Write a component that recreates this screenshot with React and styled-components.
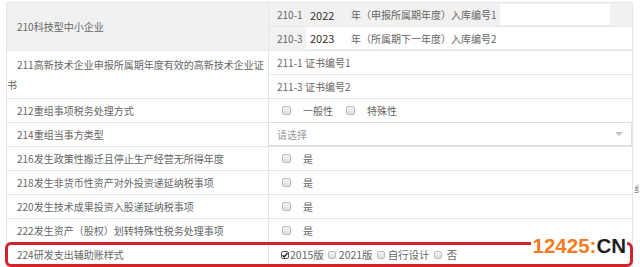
import React from "react";
import styled, { createGlobalStyle } from "styled-components";

const GlobalStyle = createGlobalStyle`
  html, body {
    margin: 0;
    padding: 0;
    background: #fff;
    overflow: hidden;
  }
  body {
    font-family: "Noto Sans CJK SC", "Noto Sans", sans-serif;
  }
`;

const Page = styled.div`
  display: flex;
  width: 640px;
  height: 267px;
  box-sizing: border-box;
  padding: 2px 0 0 6px;
  overflow: hidden;
`;

const Table = styled.div`
  width: 627px;
  flex: none;
  border-top: 1px solid #e6e6e6;
  border-left: 1px solid #e6e6e6;
  border-right: 1px solid #e6e6e6;
  box-sizing: border-box;
`;

const Side = styled.div`
  padding: 179px 0 0 1px;
  font-size: 10px;
  color: #777;
  white-space: nowrap;
`;

const Row = styled.div`
  display: grid;
  grid-template-columns: 261px 1fr;
  border-bottom: 1px solid #e6e6e6;
  background: ${(p) => (p.$shade ? "#f1f1f1" : "#fff")};
  position: relative;
`;

const Label = styled.div`
  display: flex;
  align-items: center;
  padding: 0 2px 0 0;
  min-height: ${(p) => p.$h || 23}px;
  font-size: 10px;
  line-height: 20px;
  color: #666;
  span {
    display: block;
    text-indent: 10px;
  }
`;

const Cell = styled.div`
  border-left: 1px solid #e6e6e6;
  display: flex;
  flex-direction: column;
  font-size: 10px;
  color: #666;
`;

const Sub = styled.div`
  display: flex;
  align-items: center;
  height: ${(p) => p.$h}px;
  border-bottom: ${(p) => (p.$last ? "none" : "1px solid #e6e6e6")};
  background: ${(p) => (p.$shade ? "#f1f1f1" : "#fff")};
`;

const Prefix = styled.div`
  align-self: stretch;
  display: flex;
  align-items: center;
  width: 37px;
  padding-left: 8px;
  box-sizing: border-box;
  background: #f1f1f1;
  flex: none;
`;

const Year = styled.div`
  width: 41px;
  padding-left: 4px;
  font-size: 11px;
  color: #333;
  flex: none;
`;

const Caption = styled.div`
  width: 149px;
  flex: none;
  white-space: nowrap;
`;

const Input = styled.div`
  align-self: stretch;
  width: 110px;
  margin: 1px 0;
  background: #fff;
  flex: none;
`;

const Plain = styled.div`
  display: flex;
  align-items: center;
  height: 23px;
  padding-left: 8px;
`;

const Options = styled.div`
  display: flex;
  align-items: center;
  height: 23px;
  padding-left: ${(p) => p.$pad || 13}px;
  gap: ${(p) => p.$gap || 12}px;
`;

const Option = styled.label`
  display: flex;
  align-items: center;
  gap: ${(p) => p.$gap || 12}px;
  color: #666;
  font-size: ${(p) => p.$fs || 10}px;
`;

const Box = styled.span`
  display: inline-flex;
  align-items: center;
  justify-content: center;
  width: ${(p) => p.$size}px;
  height: ${(p) => p.$size}px;
  box-sizing: border-box;
  border: 1px solid ${(p) => (p.$checked ? "#555" : "#bdbdbd")};
  border-radius: 2px;
  background: ${(p) =>
    p.$checked ? "#fff" : "linear-gradient(#f5f5f5, #dcdcdc)"};
  flex: none;
`;

const Select = styled.div`
  display: flex;
  align-items: center;
  justify-content: space-between;
  height: 24px;
  margin: -1px 0 -1px -1px;
  padding: 0 8px 0 8px;
  border: 1px solid #dedede;
  box-sizing: border-box;
  color: #999;
`;

const Caret = styled.span`
  width: 0;
  height: 0;
  border-left: 4px solid transparent;
  border-right: 4px solid transparent;
  border-top: 4px solid #c4c4c4;
`;

const Highlight = styled.div`
  position: absolute;
  top: -1px;
  left: -2px;
  right: -1px;
  bottom: -1px;
  border: 3px solid #d2232a;
  border-radius: 6px;
  pointer-events: none;
`;

const Mark = styled.div`
  position: absolute;
  top: -9px;
  right: 3px;
  padding: 0 1px 0 2px;
  background: #fff;
  font-family: "Liberation Sans", Arial, sans-serif;
  font-weight: bold;
  font-size: 20.5px;
  line-height: 1;
  color: #1e1e1e;
  letter-spacing: 0;
  em {
    font-style: normal;
    color: #f47b20;
  }
`;

const Check = ({ checked, size = 9 }) => (
  <Box $checked={checked} $size={size}>
    {checked && (
      <svg width="6" height="6" viewBox="0 0 6 6">
        <path d="M0.6 3.2 L2.3 4.9 L5.4 1" fill="none" stroke="#222" strokeWidth="1.4" />
      </svg>
    )}
  </Box>
);

const YesRow = ({ label }) => (
  <Row>
    <Label>
      <span>{label}</span>
    </Label>
    <Cell>
      <Options>
        <Option>
          <Check />是
        </Option>
      </Options>
    </Cell>
  </Row>
);

export default function App() {
  return (
    <>
      <GlobalStyle />
      <Page>
        <Table>
          <Row $shade>
            <Label $h={47}>
              <span>210科技型中小企业</span>
            </Label>
            <Cell>
              <Sub $h={23} $shade>
                <Prefix>210-1</Prefix>
                <Year>2022</Year>
                <Caption>年（申报所属期年度）入库编号1</Caption>
                <Input />
              </Sub>
              <Sub $h={22} $last>
                <Prefix>210-3</Prefix>
                <Year>2023</Year>
                <Caption>年（所属期下一年度）入库编号2</Caption>
              </Sub>
            </Cell>
          </Row>
          <Row>
            <Label $h={47}>
              <span>
                211高新技术企业申报所属期年度有效的高新技术企业证
                <br />书
              </span>
            </Label>
            <Cell>
              <Sub $h={23}>
                <Plain>211-1 证书编号1</Plain>
              </Sub>
              <Sub $h={23} $last>
                <Plain>211-3 证书编号2</Plain>
              </Sub>
            </Cell>
          </Row>
          <Row>
            <Label>
              <span>212重组事项税务处理方式</span>
            </Label>
            <Cell>
              <Options $gap={13}>
                <Option>
                  <Check />一般性
                </Option>
                <Option>
                  <Check />特殊性
                </Option>
              </Options>
            </Cell>
          </Row>
          <Row>
            <Label>
              <span>214重组当事方类型</span>
            </Label>
            <Cell>
              <Select>
                请选择
                <Caret />
              </Select>
            </Cell>
          </Row>
          <YesRow label="216发生政策性搬迁且停止生产经营无所得年度" />
          <YesRow label="218发生非货币性资产对外投资递延纳税事项" />
          <YesRow label="220发生技术成果投资入股递延纳税事项" />
          <YesRow label="222发生资产（股权）划转特殊性税务处理事项" />
          <Row>
            <Label>
              <span>224研发支出辅助账样式</span>
            </Label>
            <Cell>
              <Options $pad={12} $gap={4}>
                <Option $gap={1} $fs={10.5}>
                  <Check checked size={8} />2015版
                </Option>
                <Option $gap={3} $fs={10.5}>
                  <Check size={8} />2021版
                </Option>
                <Option $gap={3} $fs={10.5}>
                  <Check size={8} />自行设计
                </Option>
                <Option $gap={5} $fs={10.5}>
                  <Check size={8} />否
                </Option>
              </Options>
            </Cell>
            <Highlight>
              <Mark>
                <em>12425:</em>CN
              </Mark>
            </Highlight>
          </Row>
        </Table>
        <Side>纟</Side>
      </Page>
    </>
  );
}
